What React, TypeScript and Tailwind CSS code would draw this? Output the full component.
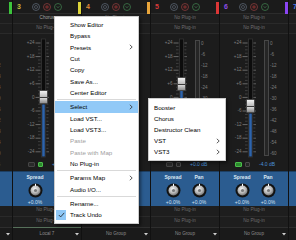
import React from 'react';

type Strip = {
  n: number;
  num: string;
  bar: string;
  slot1: string;
  slot1Light?: boolean;
  db: number;
  dbText: string;
  group: string;
  g1?: boolean;
  g2?: boolean;
  groupLine?: boolean;
};

const STRIPS: Strip[] = [
  { n: 2, num: 'text-[#3fbf3f]', bar: 'bg-[#3cc43c]', slot1: 'No Plug-in', db: 0, dbText: '+0.0 dB', group: 'No Group' },
  { n: 3, num: 'text-[#c2ba3c]', bar: 'bg-[#dcd43a]', slot1: 'Chorus', slot1Light: true, db: 0, dbText: '+0.0 dB', group: 'Local 7', g2: true, groupLine: true },
  { n: 4, num: 'text-[#e08a3a]', bar: 'bg-[#e9a53a]', slot1: 'No Plug-in', db: 0, dbText: '+0.0 dB', group: 'No Group' },
  { n: 5, num: 'text-[#d83a3a]', bar: 'bg-[#dc3636]', slot1: 'No Plug-in', db: 6, dbText: '+0.0 dB', group: 'No Group' },
  { n: 6, num: 'text-[#8c4de8]', bar: 'bg-[#8b45f2]', slot1: 'No Plug-in', db: -4, dbText: '-4.0 dB', group: 'No Group', g1: true },
  { n: 7, num: 'text-[#4a78e8]', bar: 'bg-[#4a78e8]', slot1: 'No Plug-in', db: 0, dbText: '+0.0 dB', group: 'No Group' },
];

const LEFT = ['+24', '+18', '+12', '+6', '0', '-6', '-12', '-18', '-24'];
const RIGHT = ['0', '-6', '-12', '-18', '-24', '-30', '-36', '-42', '-48', '-54', '-60'];

function HeaderIcons() {
  return (
    <div className="flex items-center gap-[3px] ml-[10px] h-[14px]">
      <svg width="8" height="8" viewBox="0 0 8 8">
        <circle cx="4" cy="4" r="3.5" fill="#1b1b1b" stroke="#5b6673" strokeWidth="0.8" />
        <circle cx="4" cy="4" r="1.5" fill="none" stroke="#5b6673" strokeWidth="0.7" />
      </svg>
      <svg width="8" height="8" viewBox="0 0 8 8">
        <circle cx="4" cy="4" r="3.5" fill="#1b1b1b" stroke="#8a3c3c" strokeWidth="0.8" />
        <circle cx="4" cy="4" r="1.8" fill="#6e2a2a" />
      </svg>
      <svg width="8" height="8" viewBox="0 0 8 8">
        <circle cx="4" cy="4" r="3.5" fill="#1b1b1b" stroke="#3f7a4c" strokeWidth="0.8" />
        <path d="M2.6 3.2 L4 4.8 L5.4 3.2" fill="none" stroke="#3f7a4c" strokeWidth="0.7" />
      </svg>
    </div>
  );
}

function Track({ db }: { db: number }) {
  const center = 9 + ((24 - db) / 6) * 13.6;
  const top = center - 7;
  const ticks: React.ReactNode[] = [];
  for (let j = 0; j <= 32; j++) {
    const y = 9 + j * 3.4;
    const major = j % 4 === 0;
    ticks.push(
      <line key={'l' + j} x1={major ? 0.5 : 3} x2={5.6} y1={y} y2={y} stroke={major ? '#8a8a8a' : '#4d4d4d'} strokeWidth={0.7} />
    );
    ticks.push(
      <line key={'r' + j} x1={11.4} x2={major ? 14 : 13.4} y1={y} y2={y} stroke={major ? '#7a7a7a' : '#4d4d4d'} strokeWidth={0.7} />
    );
  }
  return (
    <div className="relative w-[14px] h-[124px] shrink-0">
      <svg width="14" height="124" className="block">
        {ticks}
        <rect x="6.6" y="5" width="3.8" height="118" fill="#0c0c0c" stroke="#383838" strokeWidth="0.7" />
        <rect x="7.2" y={top + 14} width="2.6" height={Math.max(0, 122.5 - top - 14)} fill="#2f64ab" />
      </svg>
      <div
        className="absolute left-[4px] w-[9px] h-[14px] flex flex-col overflow-hidden rounded-[1px] border border-[#4a4a4a]"
        style={{ top }}
      >
        <div className="h-[6px] bg-gradient-to-b from-[#f2f2f2] to-[#b9b9b9]" />
        <div className="h-[1px] bg-[#3a3a3a]" />
        <div className="flex-1 bg-gradient-to-b from-[#dadada] to-[#8e8e8e]" />
      </div>
    </div>
  );
}

function Knob() {
  return (
    <svg width="15" height="15" viewBox="0 0 15 15" className="block">
      <defs>
        <radialGradient id="kg" cx="0.42" cy="0.36" r="0.7">
          <stop offset="0" stopColor="#f7f7f7" />
          <stop offset="0.55" stopColor="#b8b8b8" />
          <stop offset="1" stopColor="#666666" />
        </radialGradient>
      </defs>
      <circle cx="7.5" cy="7.5" r="7" fill="#121212" />
      <circle cx="7.5" cy="7.5" r="5" fill="url(#kg)" />
      <circle cx="7.5" cy="7.5" r="1.6" fill="#7a7a7a" />
      <line x1="7.5" y1="0.8" x2="7.5" y2="3.2" stroke="#ffffff" strokeWidth="1" />
    </svg>
  );
}

function ChannelStrip({ s }: { s: Strip }) {
  return (
    <div className="w-[69px] shrink-0 h-[240px] flex flex-col border-l border-[#111111] bg-[#1e1e1e]">
      {/* header */}
      <div className="h-[14px] flex items-start border-b border-[#2c2c2c] bg-[#1b1b1b]">
        <div className={`pl-[4px] w-[9px] h-[14px] leading-[14px] text-[7px] font-bold ${s.num}`}>{s.n}</div>
        <HeaderIcons />
        <div className={`ml-auto mr-[0.5px] mt-[2px] w-[2.5px] h-[12px] ${s.bar}`} />
      </div>
      {/* inserts */}
      <div className={`h-[10px] flex items-center justify-center text-[4.6px] border-b border-[#2a2a2a] ${s.slot1Light ? 'text-[#a3a3a3]' : 'text-[#717171]'}`}>
        {s.slot1}
      </div>
      <div className="h-[10px] flex items-center justify-center text-[4.6px] text-[#717171] border-b border-[#2a2a2a]">
        No Plug-in
      </div>
      {/* fader area */}
      <div className="h-[124px] flex bg-[#1c1c1c]">
        <div className="w-[22px] shrink-0 flex flex-col items-end pt-[2.2px] pr-[0.5px]">
          {LEFT.map((l) => (
            <div key={l} className="h-[13.6px] leading-[13.6px] text-[4.6px] text-[#7e7e7e]">
              {l}
            </div>
          ))}
        </div>
        <Track db={s.db} />
        <div className="ml-[8px] mt-[6px] w-[4.5px] h-[116px] shrink-0 bg-[#262626] border border-[#474747]" />
        <div className="ml-[1.5px] flex flex-col pt-[3.5px]">
          {RIGHT.map((l) => (
            <div key={l} className="h-[11px] leading-[11px] text-[4.6px] text-[#7e7e7e]">
              {l}
            </div>
          ))}
        </div>
      </div>
      {/* buttons row */}
      <div className="h-[13px] flex items-center pl-[15px] bg-[#1c1c1c]">
        <div
          className={`w-[7px] h-[5px] rounded-[1px] border ${s.g1 ? 'bg-[#2d8a2d] border-[#4cbf4c]' : 'bg-[#2a2a2a] border-[#454545]'}`}
        />
        <div
          className={`ml-[3px] w-[5px] h-[5px] rounded-[1px] border ${s.g2 ? 'bg-[#2d8a2d] border-[#4cbf4c]' : 'bg-[#262626] border-[#4a4a4a]'}`}
        />
        <div className="ml-[9px] text-[5px] leading-[5px] text-[#4a90da]">{s.dbText}</div>
      </div>
      {/* blue panel */}
      <div className="h-[35px] flex bg-[#2b5c90] border-t border-[#1d3f63]">
        <div className="ml-[7px] w-[30px] flex flex-col items-center pt-[2px]">
          <div className="h-[6px] leading-[6px] text-[5px] font-bold text-[#dde8f3]">Spread</div>
          <div className="mt-[3px] h-[15px]">
            <Knob />
          </div>
          <div className="mt-[1px] h-[6px] leading-[6px] text-[5px] text-[#cfe0f2]">+0.0%</div>
        </div>
        <div className="w-[22px] flex flex-col items-center pt-[2px]">
          <div className="h-[6px] leading-[6px] text-[5px] font-bold text-[#dde8f3]">Pan</div>
          <div className="mt-[3px] h-[15px]">
            <Knob />
          </div>
          <div className="mt-[1px] h-[6px] leading-[6px] text-[5px] text-[#cfe0f2]">+0.0%</div>
        </div>
      </div>
      {/* bottom inserts */}
      <div className="h-[10.5px] flex items-center justify-center text-[4.6px] text-[#6c6c6c] border-b border-[#2a2a2a]">
        No Plug-in
      </div>
      <div className="h-[10.5px] flex items-center justify-center text-[4.6px] text-[#6c6c6c]">No Plug-in</div>
      {/* group */}
      <div
        className={`relative flex-1 flex items-center justify-center text-[4.6px] text-[#8c8c8c] bg-[#1a1a1a] border-t ${s.groupLine ? 'border-[#56705a]' : 'border-[#2e2e2e]'}`}
      >
        {s.group}
        <svg width="4" height="3" viewBox="0 0 4 3" className="absolute right-[2px] top-[5px]">
          <polygon points="0,0 4,0 2,2.6" fill="#cfcfcf" />
        </svg>
      </div>
    </div>
  );
}

type Item = { t: string; sub?: boolean; hl?: boolean; dis?: boolean; check?: boolean };
const MENU: (Item | 'sep')[] = [
  { t: 'Show Editor' },
  { t: 'Bypass' },
  { t: 'Presets', sub: true },
  { t: 'Cut' },
  { t: 'Copy' },
  { t: 'Save As...' },
  { t: 'Center Editor' },
  'sep',
  { t: 'Select', sub: true, hl: true },
  { t: 'Load VST...' },
  { t: 'Load VST3...' },
  { t: 'Paste', dis: true },
  { t: 'Paste with Map', dis: true },
  { t: 'No Plug-in' },
  'sep',
  { t: 'Params Map', sub: true },
  { t: 'Audio I/O...' },
  'sep',
  { t: 'Rename...' },
  { t: 'Track Undo', check: true },
];

const SUB: Item[] = [
  { t: 'Booster' },
  { t: 'Chorus' },
  { t: 'Destructor Clean' },
  { t: 'VST', sub: true },
  { t: 'VST3', sub: true },
];

function Chevron() {
  return (
    <svg width="4" height="6" viewBox="0 0 4 6" className="absolute right-[5px] top-1/2 -translate-y-1/2">
      <path d="M0.8 0.8 L3.2 3 L0.8 5.2" fill="none" stroke="#333333" strokeWidth="0.8" />
    </svg>
  );
}

function ContextMenu() {
  return (
    <div className="absolute left-[54px] top-[16px] w-[85px] bg-white border border-[#cccccc] py-[2px] shadow-[2px_2px_3px_rgba(0,0,0,0.45)] text-[6.2px]">
      {MENU.map((m, i) =>
        m === 'sep' ? (
          <div key={'s' + i} className="h-[3px] flex items-center px-[2px]">
            <div className="h-px w-full bg-[#d9d9d9]" />
          </div>
        ) : (
          <div
            key={m.t}
            className={`relative h-[11.33px] flex items-center pl-[15px] ${m.hl ? 'bg-[#91c9f7]' : ''} ${
              m.dis ? 'text-[#a0a0a0]' : 'text-[#000000]'
            }`}
          >
            {m.check && (
              <div className="absolute left-[1px] top-[0.5px] w-[10px] h-[10px] bg-[#90c8f6] flex items-center justify-center">
                <svg width="7" height="6" viewBox="0 0 7 6">
                  <path d="M0.8 3 L2.7 4.9 L6.2 0.9" fill="none" stroke="#1a1a1a" strokeWidth="0.8" />
                </svg>
              </div>
            )}
            {m.t}
            {m.sub && <Chevron />}
          </div>
        )
      )}
    </div>
  );
}

function SubMenu() {
  return (
    <div className="absolute left-[148px] top-[98px] w-[78px] bg-white border border-[#cccccc] py-[3px] shadow-[2px_2px_3px_rgba(0,0,0,0.45)] text-[6.2px] text-black">
      {SUB.map((m) => (
        <div key={m.t} className="relative h-[11px] flex items-center pl-[5px]">
          {m.t}
          {m.sub && <Chevron />}
        </div>
      ))}
    </div>
  );
}

export default function App() {
  return (
    <div className="relative w-[296px] h-[240px] overflow-hidden bg-[#1d1d1d] font-['Liberation_Sans',Arial,sans-serif]">
      <div className="flex -ml-[57px]">
        {STRIPS.map((s) => (
          <ChannelStrip key={s.n} s={s} />
        ))}
      </div>
      <ContextMenu />
      <SubMenu />
    </div>
  );
}
